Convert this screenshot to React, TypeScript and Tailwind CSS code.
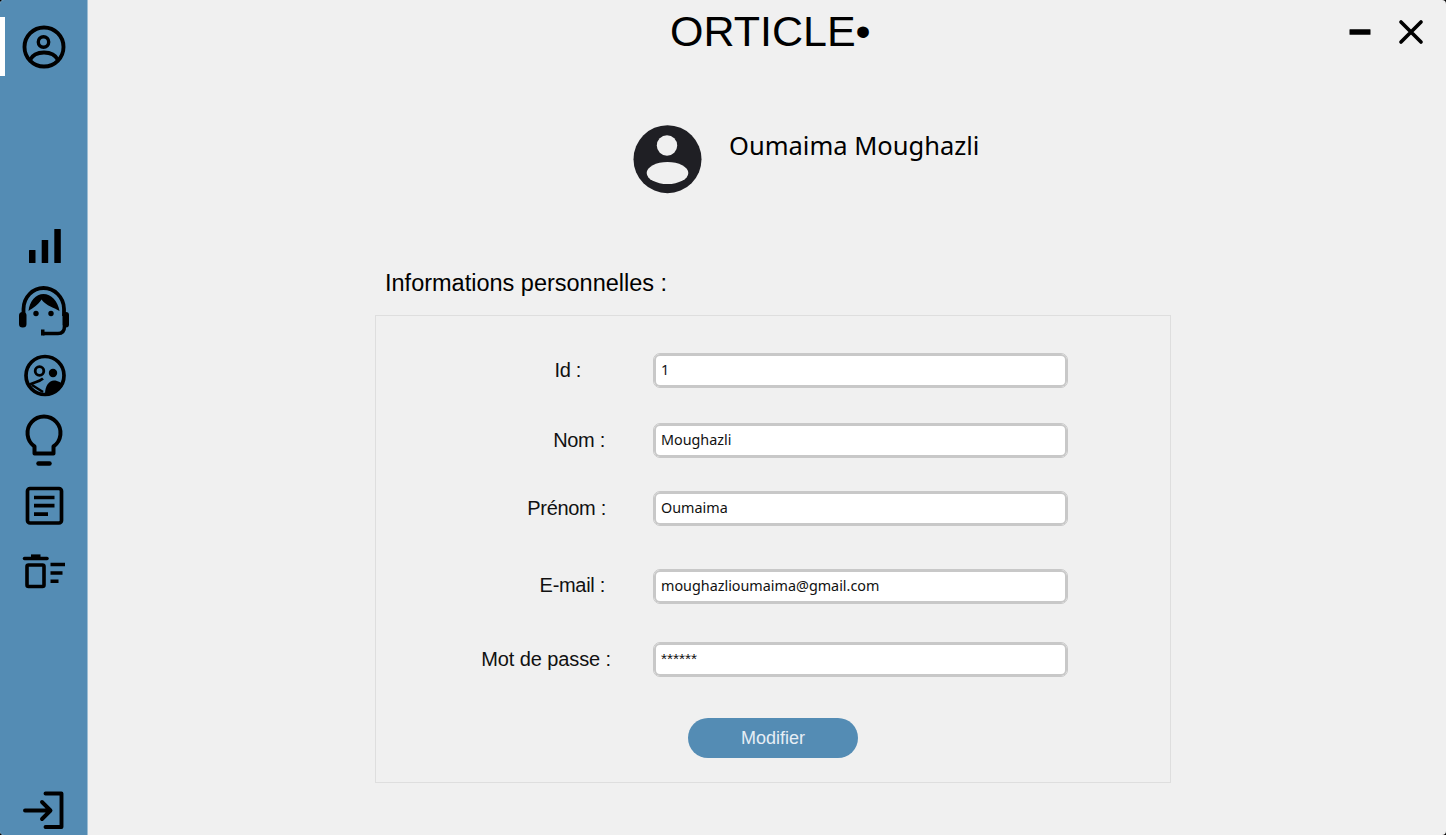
const sans = "font-['Liberation_Sans',Arial,sans-serif]";
const noto = "font-['Noto_Sans','Open_Sans',sans-serif]";

function UserIcon() {
  return (
    <svg width="52" height="50" viewBox="18 22 52 50" fill="none" stroke="#000" strokeWidth="3.900" className="block">
      <circle cx="44" cy="47" r="19.500" />
      <circle cx="43.500" cy="42" r="5.200" strokeWidth="3.400" />
      <path d="M30 60 C35 50 53 50 58 60" />
    </svg>
  );
}
function BarsIcon() {
  return (
    <svg width="52" height="36" viewBox="18 228 52 36" fill="#000" className="block">
      <rect x="29" y="250" width="6.500" height="13" rx="0.600" />
      <rect x="41.700" y="240" width="6.500" height="23" rx="0.600" />
      <rect x="54.300" y="229" width="6.500" height="34" rx="0.600" />
    </svg>
  );
}
function HeadsetIcon() {
  return (
    <svg width="52" height="52" viewBox="18 285 52 52" fill="none" className="block">
      <path d="M23.500 316 V309 C23.500 297 33 288 43.500 288 C54 288 64 297 64 309 V316" stroke="#000" strokeWidth="3.800" />
      <path d="M28.500 311 C29.500 301 36 294 43.500 294 C51 294 58 301 59.500 311 C55 308 46 306 41.500 299.500 C38 305 33 308 28.500 311 Z" fill="#000" />
      <rect x="19" y="312" width="7.500" height="15.500" rx="3.500" fill="#000" />
      <rect x="62.500" y="312" width="6.500" height="15.500" rx="3" fill="#000" />
      <circle cx="36" cy="313.500" r="2.700" fill="#000" />
      <circle cx="51" cy="313.500" r="2.700" fill="#000" />
      <path d="M43 333.500 H58 C62 333.500 64.500 331 64.500 326" stroke="#000" strokeWidth="3.500" />
      <rect x="41" y="329.500" width="3.500" height="6" fill="#000" />
    </svg>
  );
}
function PeopleIcon() {
  return (
    <svg width="52" height="44" viewBox="18 353 52 44" fill="none" className="block">
      <circle cx="45" cy="375.500" r="19" stroke="#000" strokeWidth="3.700" />
      <circle cx="39.500" cy="371" r="4.300" stroke="#000" strokeWidth="2.800" />
      <circle cx="53" cy="373" r="4.200" fill="#000" />
      <path d="M30 384.500 C34 382 39 382 43 378.500" stroke="#000" strokeWidth="2.800" />
      <path d="M32 385 L43 392" stroke="#000" strokeWidth="2.500" />
      <path d="M45 394 C45 386 49 380.500 54 380.500 C58 380.500 62 383 63 385 C60 391 52 395 45 394 Z" fill="#000" />
    </svg>
  );
}
function BulbIcon() {
  return (
    <svg width="52" height="56" viewBox="18 413 52 56" fill="none" stroke="#000" strokeWidth="4" className="block">
      <path d="M34.500 453.500 V446.500 A16.500 16.500 0 1 1 53.500 446.500 V453.500 Z" strokeLinejoin="round" />
      <path d="M38.500 463.500 H49.500" strokeWidth="4.500" strokeLinecap="round" />
    </svg>
  );
}
function DocIcon() {
  return (
    <svg width="52" height="42" viewBox="18 485 52 42" fill="none" stroke="#000" strokeWidth="3.700" className="block">
      <rect x="27.500" y="488.500" width="34" height="34.500" rx="2.500" />
      <path d="M34 497.500 H54.500 M34 505.700 H54.500 M34 514.200 H48" />
    </svg>
  );
}
function TrashIcon() {
  return (
    <svg width="52" height="38" viewBox="18 552 52 38" fill="none" stroke="#000" strokeWidth="3.600" className="block">
      <path d="M24.500 558.500 H47" strokeWidth="3.500" strokeLinecap="round" />
      <path d="M31 555.800 H40.500" strokeWidth="2.800" />
      <rect x="27" y="565" width="17" height="21.500" rx="1.500" />
      <path d="M50.500 564.500 H65 M50.500 573 H62.500 M50.500 581.200 H58.500" />
    </svg>
  );
}
function LogoutIcon() {
  return (
    <svg width="52" height="40" viewBox="18 790 52 40" fill="none" stroke="#000" strokeWidth="3.900" strokeLinecap="round" strokeLinejoin="round" className="block">
      <path d="M45.500 793.500 H61.500 V827 H45.500" />
      <path d="M25 810.500 H50 M42 802 L50.500 810.500 L42 819" />
    </svg>
  );
}

const labelNormal = "leading-[35px] tracking-[-0.3px]";
const valueNormal = "font-['Noto_Sans','Open_Sans',sans-serif] text-[14.350px]";
const fields = [
  { label: "Id :", value: "1", pr: "pr-[30px]", mt: "mt-[37px]", lab: labelNormal, val: valueNormal },
  { label: "Nom :", value: "Moughazli", pr: "pr-[6px]", mt: "mt-[35px]", lab: labelNormal, val: valueNormal },
  { label: "Prénom :", value: "Oumaima", pr: "pr-[5px]", mt: "mt-[33px]", lab: labelNormal, val: valueNormal },
  { label: "E-mail :", value: "moughazlioumaima@gmail.com", pr: "pr-[6px]", mt: "mt-[43px]", lab: "self-start leading-[33px] tracking-[-0.3px]", val: valueNormal },
  { label: "Mot de passe :", value: "******", pr: "pr-0", mt: "mt-[38px]", lab: "leading-[35px] tracking-[-0.1px]", val: "font-['Liberation_Sans',sans-serif] text-[15.400px]" },
];

export default function App() {
  return (
    <div className="w-[1446px] h-[835px] bg-black overflow-hidden">
      <div className="flex w-full h-full rounded-[4px] overflow-hidden bg-[#f0f0f0]">
        <aside className="relative w-[88px] shrink-0 bg-[#548cb4] border-r border-[#9dbdd3] flex flex-col items-center">
          <div className="absolute left-0 top-[17px] w-[5px] h-[59px] bg-white" />
          <div className="mt-[22px] ml-[1px]"><UserIcon /></div>
          <div className="mt-[156px] ml-[1px]"><BarsIcon /></div>
          <div className="mt-[21px] ml-[1px]"><HeadsetIcon /></div>
          <div className="mt-[16px] ml-[1px]"><PeopleIcon /></div>
          <div className="mt-[16px] ml-[1px]"><BulbIcon /></div>
          <div className="mt-[16px] ml-[1px]"><DocIcon /></div>
          <div className="mt-[25px] ml-[1px]"><TrashIcon /></div>
          <div className="mt-auto mb-[5px] ml-[1px]"><LogoutIcon /></div>
        </aside>
        <main className="flex-1 flex flex-col">
          <header className="flex items-start h-[64px]">
            <h1 className={`${sans} ml-[582px] mt-[6px] text-[43px] leading-[50px] font-normal text-black`}>ORTICLE•</h1>
            <div className="ml-auto flex items-center gap-[25px] mt-[18px] mr-[21px]">
              <svg width="24" height="8" viewBox="0 0 24 8" className="block"><rect x="1.500" y="1.200" width="21" height="5.500" fill="#000" rx="0.500" /></svg>
              <svg width="28" height="28" viewBox="0 0 28 28" fill="none" stroke="#000" strokeWidth="3.700" strokeLinecap="round" className="block"><path d="M4 4 L24 24 M24 4 L4 24" /></svg>
            </div>
          </header>
          <section className="flex items-start ml-[545px] mt-[61px]">
            <svg width="70" height="70" viewBox="0 0 70 70" className="block shrink-0">
              <circle cx="34.500" cy="34.200" r="34" fill="#1f1f24" />
              <circle cx="34" cy="20.500" r="10.200" fill="#f0f0f0" />
              <ellipse cx="34.500" cy="48" rx="20.800" ry="11" fill="#f0f0f0" />
            </svg>
            <p className={`${noto} ml-[26px] mt-[2px] text-[25.500px] leading-[36px] text-black`}>Oumaima Moughazli</p>
          </section>
          <h2 className={`${sans} ml-[297px] mt-[74px] text-[23.500px] leading-[28px] font-normal text-black`}>Informations personnelles :</h2>
          <section className="ml-[287px] mt-[18px] w-[796px] h-[468px] border border-[#dedede] flex flex-col">
            {fields.map((f) => (
              <div key={f.label} className={`flex items-center ${f.mt}`}>
                <label className={`${sans} w-[235px] ${f.pr} ${f.lab} text-right text-[20px] text-[#111]`}>{f.label}</label>
                <div className={`ml-[42px] w-[415px] h-[35px] bg-white border border-[#c8c8c8] shadow-[inset_0_0_0_2px_#c8c8c8] rounded-[7px] pl-[7px] leading-[31px] text-[#111] ${f.val}`}>{f.value}</div>
              </div>
            ))}
            <button className={`${sans} mt-[41px] ml-[312px] w-[170px] h-[40px] rounded-full bg-[#548cb4] text-[#e6eef5] text-[18px]`}>Modifier</button>
          </section>
        </main>
      </div>
    </div>
  );
}
